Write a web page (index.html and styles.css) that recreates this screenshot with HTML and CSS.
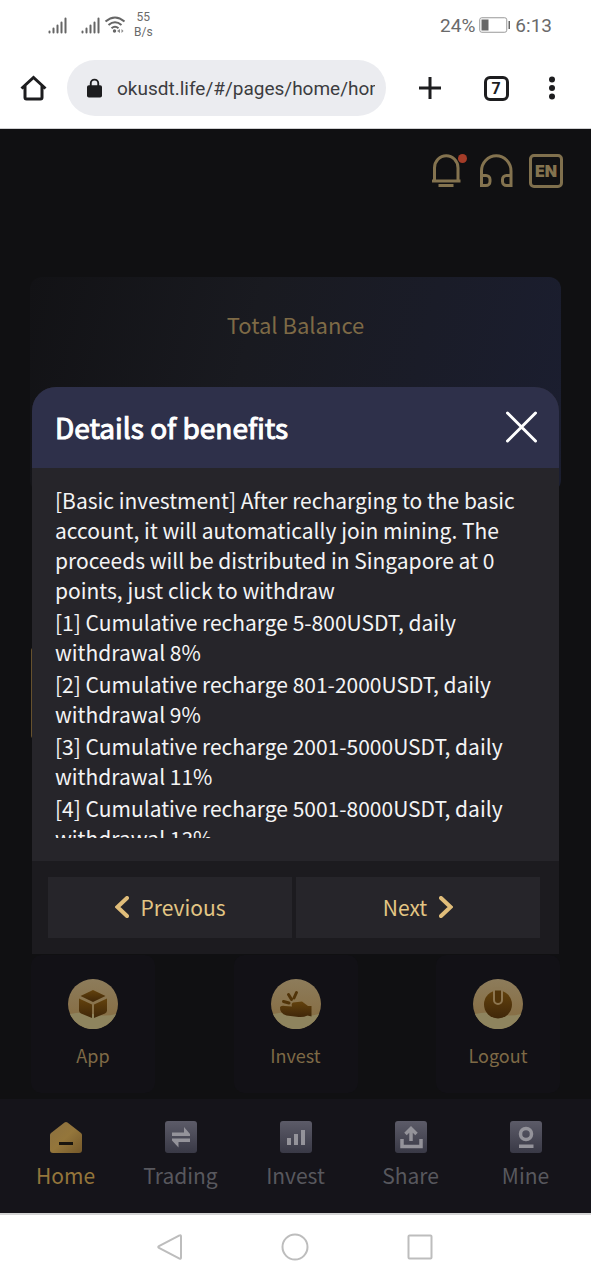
FILE: index.html
```html
<!DOCTYPE html>
<html lang="en">
<head>
<meta charset="utf-8">
<meta name="viewport" content="width=device-width, initial-scale=1">
<title>Details of benefits</title>
<link rel="stylesheet" href="styles.css">
</head>
<body>
<svg class="defs" aria-hidden="true">
  <defs>
    <linearGradient id="coin" x1="0" y1="0" x2="0" y2="1"><stop offset="0" stop-color="#8d7c5b"/><stop offset="1" stop-color="#856a3e"/></linearGradient>
    <linearGradient id="brown" x1="0" y1="0" x2="0" y2="1"><stop offset="0" stop-color="#63420d"/><stop offset="1" stop-color="#402709"/></linearGradient>
    <linearGradient id="gold" x1="0" y1="0" x2="1" y2="1"><stop offset="0" stop-color="#8b7040"/><stop offset=".5" stop-color="#94763b"/><stop offset="1" stop-color="#74582a"/></linearGradient>
    <linearGradient id="slate" x1="0" y1="0" x2="0" y2="1"><stop offset="0" stop-color="#5c5b68"/><stop offset="1" stop-color="#393946"/></linearGradient>
  </defs>
</svg>
<div class="phone">
  <header class="status">
    <div class="status-side">
      <svg class="signal" viewBox="0 0 20 18" aria-hidden="true"><path d="M1.5 16.5v-1M5.5 16.5v-4M9.5 16.5v-7M13.5 16.5v-10M17.5 16.5v-14"/></svg>
      <svg class="signal signal-second" viewBox="0 0 20 18" aria-hidden="true"><path d="M1.5 16.5v-1M5.5 16.5v-4M9.5 16.5v-7M13.5 16.5v-10M17.5 16.5v-14"/></svg>
      <svg class="wifi" viewBox="0 0 22 18" aria-hidden="true"><path d="M1.500 5.500Q11-2.500 20.500 5.500M4.500 9Q11 3.500 17.500 9M7.500 12.300Q11 9.300 14.500 12.300"/><circle cx="10.500" cy="15" r="1.700"/><path class="fill" d="M13 15l3-2v4zM17.500 13l2 2-2 2z"/></svg>
      <span class="rate">55<br>B/s</span>
    </div>
    <div class="status-side">
      <span class="status-text">24%</span>
      <svg class="battery" viewBox="0 0 32 16" aria-hidden="true"><rect x=".75" y=".75" width="27" height="14.500" rx="2"/><path class="fill" d="M2.500 2.500h7v11h-7zM29.500 4h1.500v8h-1.500z"/></svg>
      <span class="status-text">6:13</span>
    </div>
  </header>

  <div class="toolbar">
    <button class="tool" aria-label="Home page"><svg class="ico28" viewBox="0 0 28 28" aria-hidden="true"><path d="M2.500 14.500L14.500 3.500l12 11M6 12v11.500q0 1.500 1.500 1.500h14q1.500 0 1.500-1.500V12"/></svg></button>
    <label class="address">
      <svg class="lock" viewBox="0 0 16 21" aria-label="Secure"><rect x="0" y="7" width="16" height="13" rx="2"/><path d="M4 8V5a4 4 0 0 1 8 0v3"/></svg>
      <input class="address-input" type="text" aria-label="Address" value="okusdt.life/#/pages/home/home">
    </label>
    <div class="tools">
      <button class="tool" aria-label="New tab"><svg class="ico28" viewBox="0 0 28 28" aria-hidden="true"><path d="M14 3v22M3 14h22"/></svg></button>
      <button class="tool tool-tabs" aria-label="Tabs"><span class="tab-count">7</span></button>
      <button class="tool" aria-label="More"><svg class="ico28" viewBox="0 0 28 28" aria-hidden="true"><g class="fill"><circle cx="14" cy="5.500" r="3"/><circle cx="14" cy="14" r="3"/><circle cx="14" cy="22.500" r="3"/></g></svg></button>
    </div>
  </div>

  <main class="app">
    <div class="app-head">
      <button class="head-btn" aria-label="Notifications"><svg class="ico34" viewBox="0 0 34 34" aria-hidden="true"><path d="M3 27h28.500M5.500 27V14a11.500 12 0 0 1 23.500 0v13M9.500 31.500h15"/></svg><span class="dot"></span></button>
      <button class="head-btn" aria-label="Support"><svg class="ico34" viewBox="0 0 34 34" aria-hidden="true"><path d="M2.500 31.500V17a14.500 15 0 0 1 29.500 0v14.500M2.500 31.500V21.500h4.500a4 4 0 0 1 4 4v2a4 4 0 0 1-4 4zM32 31.500V21.500h-4.500a4 4 0 0 0-4 4v2a4 4 0 0 0 4 4z"/></svg></button>
      <button class="head-btn lang">EN</button>
    </div>

    <section class="balance"><h2 class="balance-title">Total Balance</h2></section>
    <div class="promo"></div>

    <div class="shortcuts">
      <button class="shortcut">
        <svg class="coin" viewBox="0 0 50 50" aria-hidden="true"><circle cx="25" cy="25" r="25" fill="url(#coin)"/><path d="M2 35Q14 32 25 35T48 35A25 25 0 0 1 2 35z" fill="#8e845e"/><g fill="url(#brown)"><path d="M25 11l12.500 6L25 23l-12.500-6z"/><path d="M11 19.500l13 6V39l-11-4.500q-2-1-2-3z"/><path d="M39 19.500l-13 6V39l11-4.500q2-1 2-3z"/></g></svg>
        App
      </button>
      <button class="shortcut">
        <svg class="coin" viewBox="0 0 50 50" aria-hidden="true"><circle cx="25" cy="25" r="25" fill="url(#coin)"/><path d="M2 35Q14 32 25 35T48 35A25 25 0 0 1 2 35z" fill="#8e845e"/><path d="M9 28q2-2 5-1l7 .5q-1-3 1-4l9-1 4 3 2 1.500h3.500v10.500l-4-1q-4 2-9 1.500l-12-1.500q-7-2-6.500-8.500z" fill="url(#brown)"/><path d="M12.500 22.500l5.500 1.500M17.500 15.500l3 5M25.500 13.500l-2.500 5.500" fill="none" stroke="#513409" stroke-width="3" stroke-linecap="round"/></svg>
        Invest
      </button>
      <button class="shortcut">
        <svg class="coin" viewBox="0 0 50 50" aria-hidden="true"><circle cx="25" cy="25" r="25" fill="url(#coin)"/><path d="M2 35Q14 32 25 35T48 35A25 25 0 0 1 2 35z" fill="#8e845e"/><circle cx="25" cy="25.500" r="14" fill="url(#brown)"/><path d="M21 10v11a4 4 0 0 0 8 0V10" fill="#513409" stroke="#8d7650" stroke-width="2"/><path d="M20 8h10v3.500H20z" fill="#8b7855"/></svg>
        Logout
      </button>
    </div>

    <nav class="tabbar">
      <a class="tab tab-active" href="#home"><svg class="ico34" viewBox="0 0 34 34" aria-hidden="true"><path d="M15.500 2.500q1.500-1 3 0L32 13q1 1 1 2V30q0 3-3 3H4q-3 0-3-3V15q0-1 1-2z" fill="url(#gold)"/><path d="M10 22h14v3H10z" fill="#19150f"/></svg>Home</a>
      <a class="tab" href="#trading"><svg class="ico34" viewBox="0 0 34 34" aria-hidden="true"><rect x="1" y="1" width="32" height="32" rx="3" fill="url(#slate)"/><path d="M8 12.500h12V7l6 7v2H8zM26 18.500v3.500H14.500v5.500l-6.500-7v-2z" fill="#94939a"/></svg>Trading</a>
      <a class="tab" href="#invest"><svg class="ico34" viewBox="0 0 34 34" aria-hidden="true"><rect x="1" y="1" width="32" height="32" rx="3" fill="url(#slate)"/><path d="M8 18h4v7H8zM15 14h4v11h-4zM22 10h4v15h-4z" fill="#94939a"/></svg>Invest</a>
      <a class="tab" href="#share"><svg class="ico34" viewBox="0 0 34 34" aria-hidden="true"><rect x="1" y="1" width="32" height="32" rx="3" fill="url(#slate)"/><path d="M17 21V9M11.500 14L17 8.500l5.500 5.500M8 19v7.500h19V19" fill="none" stroke="#94939a" stroke-width="3.500"/></svg>Share</a>
      <a class="tab" href="#mine"><svg class="ico34" viewBox="0 0 34 34" aria-hidden="true"><rect x="1" y="1" width="32" height="32" rx="3" fill="url(#slate)"/><circle cx="17" cy="14" r="5.500" fill="none" stroke="#94939a" stroke-width="3.500"/><path d="M10 24.500h14.500V28H10z" fill="#94939a"/></svg>Mine</a>
    </nav>

    <div class="overlay">
      <section class="modal" role="dialog" aria-labelledby="modal-title">
        <header class="modal-head">
          <h1 class="modal-title" id="modal-title">Details of benefits</h1>
          <button class="close" aria-label="Close"><svg class="ico34" viewBox="0 0 34 34" aria-hidden="true"><path d="M3.500 3l28 28M31.500 3l-28 28"/></svg></button>
        </header>
        <div class="modal-body">
          <div class="modal-text">
            <p>[Basic investment] After recharging to the basic account, it will automatically join mining. The proceeds will be distributed in Singapore at 0 points, just click to withdraw</p>
            <p>[1] Cumulative recharge 5-800USDT, daily withdrawal 8%</p>
            <p>[2] Cumulative recharge 801-2000USDT, daily withdrawal 9%</p>
            <p>[3] Cumulative recharge 2001-5000USDT, daily withdrawal 11%</p>
            <p>[4] Cumulative recharge 5001-8000USDT, daily withdrawal 13%</p>
          </div>
        </div>
        <footer class="modal-foot">
          <button class="step"><svg class="chevron" viewBox="0 0 14 22" aria-hidden="true"><path d="M12 2L2.500 11l9.500 9"/></svg>Previous</button>
          <button class="step">Next<svg class="chevron" viewBox="0 0 14 22" aria-hidden="true"><path d="M2 2l9.500 9L2 20"/></svg></button>
        </footer>
      </section>
    </div>
  </main>

  <footer class="sysnav">
    <button class="sys" aria-label="Back"><svg class="ico28" viewBox="0 0 28 28" aria-hidden="true"><path d="M23.500 2.500q1.500-1 1.500 1v21q0 2-1.500 1L3 15q-1.500-1 0-2z"/></svg></button>
    <button class="sys" aria-label="Home screen"><svg class="ico28" viewBox="0 0 28 28" aria-hidden="true"><circle cx="14" cy="14" r="12.500"/></svg></button>
    <button class="sys" aria-label="Recent apps"><svg class="ico28" viewBox="0 0 28 28" aria-hidden="true"><rect x="2.500" y="2.500" width="23" height="23" rx="1"/></svg></button>
  </footer>
</div>
</body>
</html>
```

FILE: styles.css
```css
* { box-sizing: border-box; }

body {
  margin: 0;
  background: #fff;
  font-family: "Noto Sans CJK SC", "Noto Sans", sans-serif;
}

button {
  margin: 0;
  padding: 0;
  border: 0;
  background: none;
  font: inherit;
  color: inherit;
}

svg { display: block; flex: none; }
h1, h2, p { margin: 0; }
.defs { position: absolute; width: 0; height: 0; }
.ico28 { width: 28px; height: 28px; }
.ico34 { width: 34px; height: 34px; }

.phone {
  display: flex;
  flex-direction: column;
  min-height: 100vh;
}

/* Status bar */
.status {
  display: flex;
  align-items: center;
  justify-content: space-between;
  height: 50px;
  padding: 0 39px 0 48px;
  color: #6a6a6a;
  font-family: Roboto, sans-serif;
}
.status-side { display: flex; align-items: center; }
.signal {
  width: 20px;
  height: 18px;
  fill: none;
  stroke: #666;
  stroke-width: 2;
  stroke-linecap: round;
}
.signal-second { margin-left: 13px; }
.wifi {
  width: 22px;
  height: 18px;
  margin-left: 3px;
  fill: #666;
}
.wifi path { fill: none; stroke: #666; stroke-width: 2; }
.wifi .fill { fill: #888; stroke: none; }
.rate {
  margin-left: 8px;
  font-size: 12px;
  line-height: 15px;
  text-align: center;
}
.status-text { font-size: 19px; }
.battery { width: 32px; height: 16px; margin: 0 4px; }
.battery rect { fill: none; stroke: #999; }
.battery .fill { fill: #666; }

/* Browser toolbar */
.toolbar {
  display: flex;
  align-items: center;
  height: 79px;
  padding: 0 25px 2px 19px;
  border-bottom: 1px solid #d0d0d2;
  color: #1d1d1f;
}
.tool svg { fill: none; stroke: #1d1d1f; stroke-width: 3; }
.tool .fill { fill: #1d1d1f; stroke: none; }
.address {
  display: flex;
  flex: 1;
  align-items: center;
  gap: 15px;
  min-width: 0;
  height: 56px;
  margin: 0 30px 0 20px;
  padding: 0 11px 0 20px;
  border-radius: 28px;
  background: #ebecf0;
}
.lock { width: 15px; height: 21px; fill: #1d1d1f; }
.lock path { fill: none; stroke: #1d1d1f; stroke-width: 2; }
.address-input {
  flex: 1;
  min-width: 0;
  padding: 0;
  border: 0;
  outline: 0;
  background: none;
  color: #3c3c40;
  font: 19px Roboto, sans-serif;
}
.tools { display: flex; gap: 28px; }
.tools .tool { width: 28px; height: 28px; }
.tool-tabs { margin-left: 10px; }
.tab-count {
  display: block;
  width: 25px;
  height: 25px;
  margin: 0 auto;
  border: 3px solid #1d1d1f;
  border-radius: 6px;
  font: bold 16px/19px Roboto, sans-serif;
}

/* App page */
.app {
  position: relative;
  display: flex;
  flex: 1;
  flex-direction: column;
  background: #101012;
}
.app-head {
  display: flex;
  justify-content: flex-end;
  gap: 16px;
  padding: 25px 28px 0;
}
.head-btn { position: relative; width: 34px; height: 34px; }
.head-btn svg { fill: none; stroke: #84734f; stroke-width: 3; }
.dot {
  position: absolute;
  top: 0;
  right: -4px;
  width: 9px;
  height: 9px;
  border-radius: 50%;
  background: #a43c28;
}
.lang {
  border: 3px solid #80704d;
  border-radius: 5px;
  color: #84734f;
  font: 900 16px Inter, sans-serif;
}
.balance {
  height: 215px;
  margin: 89px 30px 0;
  padding-top: 31px;
  border-radius: 12px;
  background: linear-gradient(105deg, #121215, #191a20 40%, #1b1e30);
  text-align: center;
}
.balance-title {
  color: #7e6a46;
  font-size: 22px;
  font-weight: 400;
  line-height: 32px;
}
.promo {
  height: 90px;
  margin: 156px 34px 0 31px;
  border-radius: 2px;
  background: #66512d;
}
.shortcuts {
  display: flex;
  justify-content: space-between;
  margin: auto 31px 6px;
}
.shortcut {
  display: flex;
  flex-direction: column;
  align-items: center;
  gap: 12px;
  width: 124px;
  height: 138px;
  padding-top: 24px;
  border-radius: 10px;
  background: #121116;
  color: #7e6a46;
  font-size: 18px;
  line-height: 28px;
}
.coin { width: 50px; height: 50px; }
.tabbar {
  display: flex;
  height: 114px;
  padding: 21px 8px 0;
  background: #15141a;
}
.tab {
  display: flex;
  flex: 1;
  flex-direction: column;
  align-items: center;
  gap: 5px;
  color: #58585e;
  font-size: 21px;
  line-height: 32px;
  text-decoration: none;
}
.tab-active { color: #94763b; }

/* Dialog */
.overlay {
  position: absolute;
  inset: 0;
  display: flex;
  align-items: center;
  justify-content: center;
  padding: 0 32px 2px;
}
.modal {
  width: 100%;
  overflow: hidden;
  border-radius: 24px 24px 0 0;
  background: #26252a;
}
.modal-head {
  display: flex;
  align-items: center;
  justify-content: space-between;
  height: 81px;
  padding: 0 21px 0 23px;
  background: #2e304a;
}
.modal-title {
  color: #fff;
  font-size: 28px;
  font-weight: 400;
  line-height: 40px;
  -webkit-text-stroke: 1px #fff;
}
.close svg { fill: none; stroke: #fff; stroke-width: 3; stroke-linecap: round; }
.modal-body { padding: 17px 23px 23px; }
.modal-text {
  display: flex;
  flex-direction: column;
  gap: 2px;
  height: 353px;
  overflow: hidden;
  color: #f4f4f5;
  font-size: 21px;
  line-height: 30px;
}
.modal-text p { flex: none; }
.modal-foot {
  display: flex;
  gap: 4px;
  padding: 16px 19px 16px 16px;
  background: #1c1b1f;
}
.step {
  display: flex;
  flex: 1;
  align-items: center;
  justify-content: center;
  gap: 12px;
  height: 61px;
  background: #26252a;
  color: #e3c684;
  font-size: 21px;
}
.chevron {
  width: 14px;
  height: 22px;
  fill: none;
  stroke: #e0bd7a;
  stroke-width: 4;
  stroke-linecap: round;
}

/* System navigation */
.sysnav {
  display: flex;
  align-items: center;
  justify-content: center;
  gap: 97px;
  height: 67px;
  padding: 0 2px 2px 0;
  border-top: 2px solid #d4d4d4;
}
.sysnav svg { fill: none; stroke: #bdbdbd; stroke-width: 2; }
```
